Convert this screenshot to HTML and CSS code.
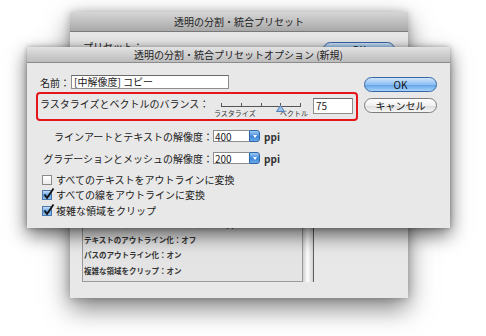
FILE: index.html
```html
<!DOCTYPE html>
<html lang="ja">
<head>
    <meta charset="UTF-8">
    <meta name="viewport" content="width=device-width, initial-scale=1.0">
    <title>透明の分割・統合プリセットオプション</title>
    <link rel="stylesheet" href="styles.css">
</head>
<body>
    <div class="desk">
        <div class="win back">
            <div class="titlebar back-title">透明の分割・統合プリセット</div>
            <div class="back-body">
                <div class="back-top">
                    <span class="back-label">プリセット：</span>
                    <span class="aqua-btn primary back-ok">OK</span>
                </div>
                <div class="back-list-wrap">
                    <div class="back-list">
                        <p>ラスタライズとベクトルのバランス：75</p>
                        <p>ラインアートとテキストの解像度：400 ppi</p>
                        <p>グラデーションとメッシュの解像度：200 ppi</p>
                        <p>テキストのアウトライン化：オフ</p>
                        <p>パスのアウトライン化：オン</p>
                        <p>複雑な領域をクリップ：オン</p>
                    </div>
                    <div class="back-scroll"></div>
                </div>
            </div>
        </div>

        <div class="win front">
            <div class="titlebar front-title">透明の分割・統合プリセットオプション (新規)</div>
            <div class="front-body">
                <div class="fields">
                    <div class="row name-row">
                        <span class="name-label">名前：</span>
                        <span class="textbox name-box">[中解像度] コピー</span>
                    </div>

                    <div class="balance">
                        <span class="balance-label">ラスタライズとベクトルのバランス：</span>
                        <div class="slider">
                            <div class="track">
                                <span class="tick"></span>
                                <span class="tick"></span>
                                <span class="tick"></span>
                                <span class="tick"></span>
                                <span class="tick"></span>
                                <svg class="thumb" width="9" height="7" viewBox="0 0 9 7">
                                    <path d="M4.5 0.5 L8.5 6.5 L0.5 6.5 Z" fill="#9cc0e6" stroke="#4f7fb4" stroke-width="1"/>
                                </svg>
                            </div>
                            <div class="slider-labels">
                                <span>ラスタライズ</span>
                                <span>ベクトル</span>
                            </div>
                        </div>
                        <span class="textbox num-box">75</span>
                    </div>

                    <div class="row res-row">
                        <span class="res-label">ラインアートとテキストの解像度：</span>
                        <span class="select"><span class="select-val">400</span><span class="select-arrow"></span></span>
                        <span class="unit">ppi</span>
                    </div>
                    <div class="row res-row res-row2">
                        <span class="res-label">グラデーションとメッシュの解像度：</span>
                        <span class="select"><span class="select-val">200</span><span class="select-arrow"></span></span>
                        <span class="unit">ppi</span>
                    </div>

                    <div class="checks">
                        <div class="check-row">
                            <span class="checkbox"></span>
                            <span>すべてのテキストをアウトラインに変換</span>
                        </div>
                        <div class="check-row">
                            <span class="checkbox on">
                                <svg width="13" height="13" viewBox="0 0 13 13"><path d="M2.5 6.5 L5 10 L11.5 0.5" fill="none" stroke="#111" stroke-width="1.8"/></svg>
                            </span>
                            <span>すべての線をアウトラインに変換</span>
                        </div>
                        <div class="check-row">
                            <span class="checkbox on">
                                <svg width="13" height="13" viewBox="0 0 13 13"><path d="M2.5 6.5 L5 10 L11.5 0.5" fill="none" stroke="#111" stroke-width="1.8"/></svg>
                            </span>
                            <span>複雑な領域をクリップ</span>
                        </div>
                    </div>
                </div>

                <div class="buttons">
                    <span class="aqua-btn primary">OK</span>
                    <span class="aqua-btn">キャンセル</span>
                </div>
            </div>
        </div>
    </div>
</body>
</html>
```

FILE: styles.css
```css
body {
    margin: 0;
    background: #fff;
    font-family: "Noto Sans CJK JP", "DejaVu Sans", sans-serif;
    font-size: 10px;
    color: #1a1a1a;
}
.desk {
    position: relative;
    width: 486px;
    height: 336px;
    overflow: hidden;
}
.win {
    position: absolute;
    background: #e8e8e8;
    display: flex;
    flex-direction: column;
}
.titlebar {
    text-align: center;
    color: #222;
    font-size: 10px;
    box-sizing: border-box;
}

/* back window */
.back {
    left: 70px;
    top: 12px;
    width: 338px;
    height: 286px;
    box-shadow: 0 10px 24px rgba(0, 0, 0, 0.5), 0 0 8px rgba(0, 0, 0, 0.22);
}
.back-title {
    height: 20px;
    line-height: 19px;
    background: linear-gradient(#d6d6d6, #a9a9a9);
    border-bottom: 1px solid #7a7a7a;
}
.back-body {
    flex: 1;
    display: flex;
    flex-direction: column;
    padding: 9px 13px 16px 12px;
    min-height: 0;
}
.back-top {
    display: flex;
    justify-content: space-between;
    align-items: flex-start;
    padding-left: 1px;
}
.back-label {
    line-height: 12px;
}
.back-ok {
    width: 72px;
    margin-top: 1px;
}
.back-list-wrap {
    flex: 1;
    display: flex;
    margin-top: 6px;
    width: 232px;
}
.back-list {
    flex: 1;
    border: 1px solid #9a9a9a;
    background: #e4e4e4;
    display: flex;
    flex-direction: column;
    justify-content: flex-end;
    padding: 0 0 3px 1px;
    overflow: hidden;
}
.back-list p {
    margin: 0;
    font-size: 7.5px;
    font-weight: bold;
    line-height: 15.5px;
    color: #333;
}
.back-scroll {
    width: 10px;
    background: linear-gradient(to right, #cfcfcf, #fdfdfd 45%, #d2d2d2);
    border-right: 1px solid #5e5e5e;
}

/* front dialog */
.front {
    left: 27px;
    top: 47px;
    width: 423px;
    height: 181px;
    box-shadow: 0 7px 18px rgba(0, 0, 0, 0.6), 0 0 5px rgba(0, 0, 0, 0.3);
}
.front-title {
    height: 16px;
    line-height: 16px;
    background: linear-gradient(#e2e2e2, #bcbcbc);
    border-bottom: 1px solid #8c8c8c;
}
.front-body {
    flex: 1;
    display: flex;
    padding: 0 13px 0 9px;
}
.fields {
    width: 322px;
    display: flex;
    flex-direction: column;
    padding-top: 12px;
}
.row {
    display: flex;
    align-items: center;
    padding-left: 4px;
}
.name-row {
    height: 14px;
}
.name-label {
    width: 31px;
}
.textbox {
    background: #fff;
    border: 1px solid #8e8e8e;
    border-top-color: #6a6a6a;
    box-sizing: border-box;
    line-height: 12px;
    padding-left: 2px;
}
.name-box {
    width: 158px;
    height: 14px;
}
.balance {
    margin-top: 3px;
    height: 29px;
    box-sizing: border-box;
    border: 2px solid #e3161a;
    border-radius: 4px;
    display: flex;
    align-items: flex-start;
    padding: 4px 0 0 2px;
}
.balance-label {
    width: 174px;
    line-height: 12px;
}
.slider {
    width: 94px;
    padding-top: 2px;
}
.track {
    position: relative;
    margin-left: 7px;
    width: 80px;
    height: 6px;
    border-bottom: 1px solid #555;
    display: flex;
    justify-content: space-between;
    align-items: flex-end;
}
.tick {
    width: 1px;
    height: 3px;
    background: #555;
}
.thumb {
    position: absolute;
    left: 55px;
    top: 5px;
}
.slider-labels {
    display: flex;
    justify-content: space-between;
    font-size: 7px;
    line-height: 9px;
    margin-top: 2px;
    color: #333;
}
.num-box {
    width: 40px;
    height: 16px;
    margin-left: 5px;
    line-height: 14px;
}
.res-row {
    margin-top: 9px;
    height: 12px;
}
.res-row2 {
    margin-top: 10px;
}
.res-label {
    width: 173px;
    text-align: right;
}
.select {
    display: flex;
    height: 12px;
}
.select-val {
    width: 36px;
    background: #fff;
    border: 1px solid #8e8e8e;
    border-right: none;
    box-sizing: border-box;
    line-height: 11px;
    padding-left: 1px;
}
.select-arrow {
    width: 11px;
    border-radius: 0 3px 3px 0;
    background: linear-gradient(#9ecbf5, #3e87d9 55%, #6aa9ea);
    border: 1px solid #2f66a8;
    box-sizing: border-box;
    display: flex;
    align-items: center;
    justify-content: center;
}
.select-arrow::after {
    content: "";
    border-left: 2.5px solid transparent;
    border-right: 2.5px solid transparent;
    border-top: 3px solid #fff;
}
.unit {
    margin-left: 4px;
    font-weight: bold;
    color: #333;
}
.checks {
    margin-top: 8px;
    display: flex;
    flex-direction: column;
}
.check-row {
    display: flex;
    align-items: center;
    height: 15.5px;
    line-height: 12px;
    padding-left: 6px;
}
.checkbox {
    position: relative;
    width: 10px;
    height: 10px;
    box-sizing: border-box;
    border: 1px solid #8a8a8a;
    background: linear-gradient(#fff, #ececec);
    margin-right: 4px;
}
.checkbox.on {
    background: linear-gradient(#c5def7, #5d9de0 55%, #8fc0ef);
    border-color: #4a78ad;
}
.checkbox svg {
    position: absolute;
    left: -1px;
    top: -3px;
}
.buttons {
    display: flex;
    flex-direction: column;
    gap: 6px;
    padding-top: 14px;
    margin-left: 6px;
    width: 73px;
}
.aqua-btn {
    display: block;
    height: 15px;
    box-sizing: border-box;
    line-height: 13px;
    text-align: center;
    border: 1px solid #7c7c7c;
    border-radius: 8px;
    background: linear-gradient(#ffffff, #f0f0f0 50%, #dcdcdc 51%, #f6f6f6);
    color: #111;
}
.aqua-btn.primary {
    border-color: #3766a3;
    background: linear-gradient(#cfe5fb, #8dc0f2 50%, #5d9fe6 51%, #a8d4fb);
}
```
